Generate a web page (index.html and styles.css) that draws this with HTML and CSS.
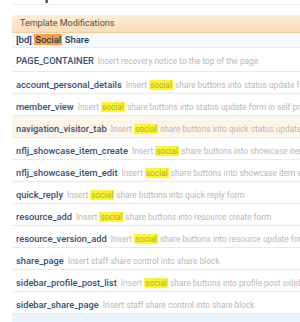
FILE: index.html
```html
<!DOCTYPE html>
<html lang="en">

<head>
  <meta charset="UTF-8" />
  <meta name="viewport" content="width=device-width, initial-scale=1.0" />
  <title>Template Modifications</title>
  <link rel="stylesheet" href="styles.css">
</head>

<body>

  <div class="page">
    <div class="title"><h1>Setup</h1></div>

    <div class="block">
      <h2 class="block-head">Template Modifications</h2>
      <h3 class="addon">[bd] <span class="hl-addon">Social</span> Share</h3>

      <ul class="mods">
        <li class="first"><b>PAGE_CONTAINER</b> <span>Insert recovery notice to the top of the page</span></li>
        <li><b>account_personal_details</b> <span>Insert <mark>social</mark> share buttons into status update form in personal details</span></li>
        <li><b>member_view</b> <span>Insert <mark>social</mark> share buttons into status update form in self profile</span></li>
        <li class="hover"><b>navigation_visitor_tab</b> <span>Insert <mark>social</mark> share buttons into quick status update form</span></li>
        <li><b>nflj_showcase_item_create</b> <span>Insert <mark>social</mark> share buttons into showcase item create form</span></li>
        <li><b>nflj_showcase_item_edit</b> <span>Insert <mark>social</mark> share buttons into showcase item edit form</span></li>
        <li><b>quick_reply</b> <span>Insert <mark>social</mark> share buttons into quick reply form</span></li>
        <li><b>resource_add</b> <span>Insert <mark>social</mark> share buttons into resource create form</span></li>
        <li><b>resource_version_add</b> <span>Insert <mark>social</mark> share buttons into resource update form</span></li>
        <li><b>share_page</b> <span>Insert staff share control into share block</span></li>
        <li><b>sidebar_profile_post_list</b> <span>Insert <mark>social</mark> share buttons into profile post sidebar block</span></li>
        <li><b>sidebar_share_page</b> <span>Insert staff share control into share block</span></li>
      </ul>

      <div class="block-foot"></div>
    </div>
  </div>

</body>

</html>
```

FILE: styles.css
```css
/* base */
body {
  margin: 0;
  background: #fff;
  font-family: Roboto, Arial, sans-serif;
  overflow: hidden;
}

.page {
  padding-left: 12px;
}

/* titulo da pagina, so o rabo do texto aparece */
.title {
  height: 4px;
  overflow: hidden;
  border-bottom: 1px solid #e6edf5;
}

.title h1 {
  margin: -13px 0 0 0;
  font-family: "Liberation Sans", Arial, sans-serif;
  font-size: 15px;
  line-height: 15px;
  color: #2b3b50;
}

.block {
  margin-top: 10px;
}

.block-head {
  margin: 0;
  height: 17px;
  line-height: 17px;
  padding-left: 8px;
  font-size: 9px;
  font-weight: normal;
  color: #5e4a36;
  background: linear-gradient(#fdeed8, #f9ddb6);
  border-bottom: 1px solid #efcd9e;
  border-top-left-radius: 3px;
}

.addon {
  margin: 0;
  height: 14px;
  line-height: 14px;
  padding-left: 4px;
  font-size: 9.5px;
  font-weight: 500;
  color: #2c3a4e;
  background: #f5f9fd;
  border-bottom: 1px solid #e3ebf4;
}

.hl-addon {
  background: #f2a24e;
  padding: 0 1px;
}

.mods {
  list-style: none;
  margin: 0;
  padding: 0;
}

.mods li {
  height: 21px;
  line-height: 21px;
  padding-left: 4px;
  border-bottom: 1px solid #e3ebf4;
  white-space: nowrap;
  overflow: hidden;
}

.mods li.first {
  height: 23px;
  line-height: 21px;
}

.mods li.hover {
  background: #fdf4ea;
}

.mods b {
  font-size: 9.3px;
  font-weight: 500;
  color: #34507a;
}

.mods span {
  font-size: 8.3px;
  color: #b8b8b8;
}

.mods mark {
  background: #fbf532;
  color: #b2a840;
  padding: 0 1px;
}

.block-foot {
  height: 10px;
  background: #e9f3fd;
}
```
